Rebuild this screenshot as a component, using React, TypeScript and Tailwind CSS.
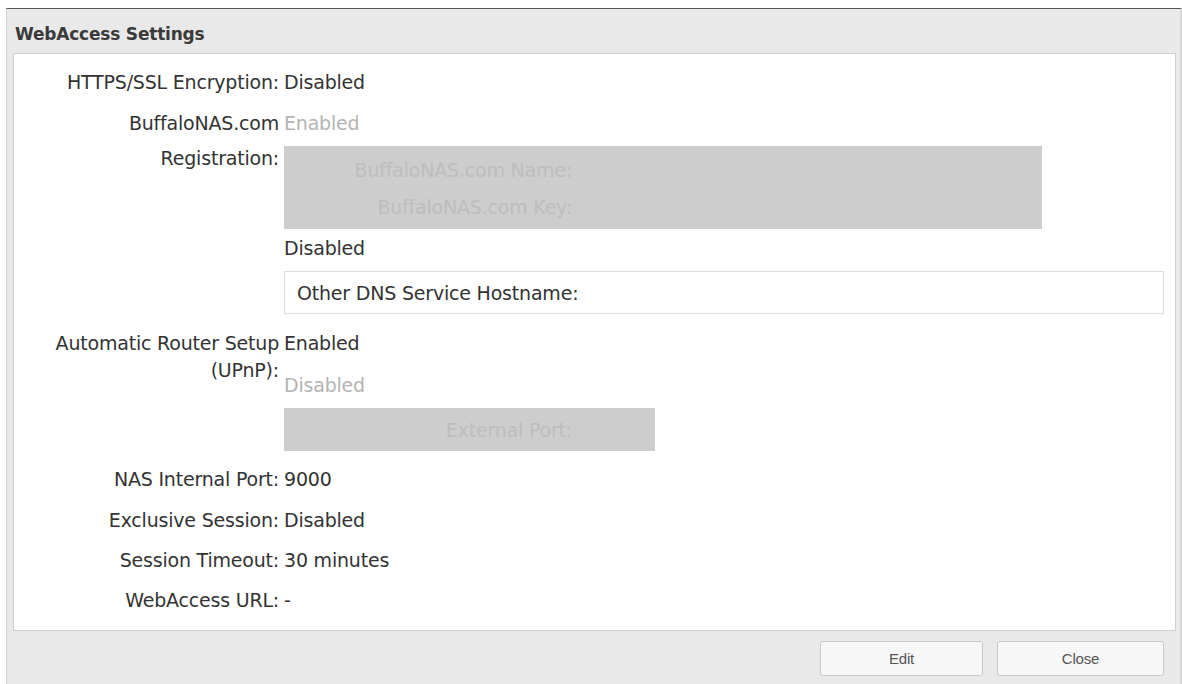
import React from 'react';

const font = { fontFamily: '"DejaVu Sans", Verdana, sans-serif' };

const Label: React.FC<{ children: React.ReactNode }> = ({ children }) => (
  <div className="w-[270px] shrink-0 pr-[5px] text-right">{children}</div>
);

export default function App() {
  return (
    <div className="w-[1182px] h-[684px] bg-white pt-[8px] pl-[6px] text-[19px] leading-[24px] text-[#333] tracking-[-0.2px]" style={font}>
      <div className="h-full bg-[#e9e9e9] border-l border-t border-l-[#d0d0d0] border-t-[#555] border-r-2 border-r-[#d6d6d6] flex flex-col">
        <div className="h-[44px] shrink-0 flex items-center pt-[5px] pl-[8px] font-bold text-[17px] text-[#3a3a3a]">
          WebAccess Settings
        </div>
        <div className="ml-[6px] mr-[4px] h-[578px] shrink-0 bg-white border border-[#cfcfcf] flex flex-col">
          <div className="flex mt-[16px]">
            <Label>HTTPS/SSL Encryption:</Label>
            <div>Disabled</div>
          </div>

          <div className="flex mt-[17px]">
            <Label>
              <div>BuffaloNAS.com</div>
              <div className="mt-[11px]">Registration:</div>
            </Label>
            <div className="flex-1 flex flex-col">
              <div className="text-[#b4b4b4]">Enabled</div>
              <div className="mt-[11px] w-[758px] h-[83px] bg-[#cdcdcd] flex flex-col items-end pr-[470px] pt-[12px] gap-[13px] text-[#bdbdbd]">
                <div>BuffaloNAS.com Name:</div>
                <div>BuffaloNAS.com Key:</div>
              </div>
              <div className="mt-[7px]">Disabled</div>
              <div className="mt-[11px] mr-[11px] h-[43px] border border-[#dcdcdc] flex items-center pl-[12px]">
                Other DNS Service Hostname:
              </div>
            </div>
          </div>

          <div className="flex mt-[17px]">
            <Label>
              <div>Automatic Router Setup</div>
              <div className="mt-[3px]">(UPnP):</div>
            </Label>
            <div className="flex-1 flex flex-col">
              <div>Enabled</div>
              <div className="mt-[18px] text-[#b4b4b4]">Disabled</div>
              <div className="mt-[11px] w-[371px] h-[43px] bg-[#cdcdcd] flex items-center justify-end pr-[83px] text-[#bdbdbd]">
                External Port:
              </div>
            </div>
          </div>

          <div className="flex mt-[16px]">
            <Label>NAS Internal Port:</Label>
            <div>9000</div>
          </div>
          <div className="flex mt-[17px]">
            <Label>Exclusive Session:</Label>
            <div>Disabled</div>
          </div>
          <div className="flex mt-[16px]">
            <Label>Session Timeout:</Label>
            <div>30 minutes</div>
          </div>
          <div className="flex mt-[16px]">
            <Label>WebAccess URL:</Label>
            <div>-</div>
          </div>
        </div>
        <div className="flex justify-end gap-[14px] pr-[16px] pt-[10px]">
          <button
            className="w-[163px] h-[35px] rounded-[3px] border border-[#c9c9c9] bg-[#f7f7f7] text-[15px] text-[#555]"
            style={{ fontFamily: '"Liberation Sans", Arial, sans-serif' }}
          >
            Edit
          </button>
          <button
            className="w-[167px] h-[35px] rounded-[3px] border border-[#c9c9c9] bg-[#f7f7f7] text-[15px] text-[#555]"
            style={{ fontFamily: '"Liberation Sans", Arial, sans-serif' }}
          >
            Close
          </button>
        </div>
      </div>
    </div>
  );
}
